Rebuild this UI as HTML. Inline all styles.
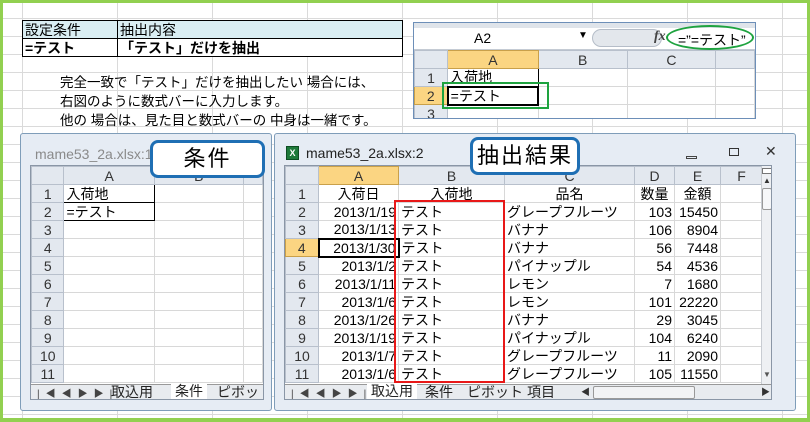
<!DOCTYPE html>
<html><head><meta charset="utf-8"><style>
*{margin:0;padding:0;box-sizing:border-box}
body{width:810px;height:422px;position:relative;overflow:hidden;background:#fff;font-family:"Liberation Sans","Noto Sans CJK JP",sans-serif;color:#000}
.a{position:absolute}
.bg{position:absolute;left:0;top:0;width:810px;height:422px;
background-image:linear-gradient(to right,#dadada 1px,transparent 1px),linear-gradient(to bottom,#dadada 1px,transparent 1px);
background-size:95px 18px;background-position:22px 0}
.frame{position:absolute;left:0;top:0;width:810px;height:422px;border:3px solid #92d050;border-bottom-width:4px}
table{border-collapse:collapse;table-layout:fixed;position:absolute}
td{height:18px;border:1px solid #d8d8d8;font-size:14px;line-height:16px;white-space:nowrap;overflow:hidden;padding:0 2px}
td.h{background:#e3e8ef;color:#333;text-align:center;border-color:#b8c0cc}
td.o{background:#fbd582;border-color:#c9a04a}
.r{text-align:right}.c{text-align:center}
.win{position:absolute;background:#e6ecf4;border:1px solid #7f9db9;border-radius:3px}
.call{position:absolute;background:#fff;border:3px solid #1f6fb4;border-radius:8px;font-size:22px;text-align:center;letter-spacing:2px}
.tabs{position:absolute;height:16px;background:#e8ebef;border-top:1px solid #999;font-size:14px;line-height:15px;color:#222}
</style></head><body>
<div class="bg"></div>

<table style="left:22px;top:20px;width:380px">
<col style="width:95px"><col style="width:285px">
<tr><td style="background:#daeef3;border:1px solid #000;height:17px">設定条件</td><td style="background:#daeef3;border:1px solid #000">抽出内容</td></tr>
<tr><td style="background:#fff;border:1px solid #000;font-weight:bold;height:17px">=テスト</td><td style="background:#fff;border:1px solid #000;font-weight:bold">「テスト」だけを抽出</td></tr>
</table>
<div class="a" style="left:60px;top:73px;font-size:13.5px;line-height:19px">完全一致で「テスト」だけを抽出したい 場合には、<br>右図のように数式バーに入力します。<br>他の 場合は、見た目と数式バーの 中身は一緒です。</div>

<div class="a" style="left:413px;top:22px;width:343px;height:97px;border:1px solid #6d8fb8;background:#fff;overflow:hidden">
 <div class="a" style="left:0;top:0;width:343px;height:5px;background:#dfe4ea"></div>
 <div class="a" style="left:0;top:5px;width:343px;height:22px;background:#fff;border-bottom:1px solid #c4cbd4"></div>
 <div class="a" style="left:60px;top:7px;font-size:14px">A2</div>
 <div class="a" style="left:164px;top:7px;font-size:10px">▼</div>
 <div class="a" style="left:178px;top:6px;width:70px;height:18px;border:1px solid #b5bdc8;border-radius:9px;background:#e3e7ec"></div>
 <div class="a" style="left:240px;top:6px;font-size:14px;font-style:italic;font-family:'Liberation Serif',serif;font-weight:bold;color:#444">fx</div>
 <div class="a" style="left:264px;top:7px;font-size:14px">=”=テスト”</div>
 <div class="a" style="left:252px;top:2px;width:88px;height:25px;border:2px solid #1ea33f;border-radius:50%"></div>
 <table style="left:0;top:27px">
 <col style="width:34px"><col style="width:92px"><col style="width:92px"><col style="width:92px"><col style="width:40px">
 <tr><td class="h"></td><td class="h o">A</td><td class="h">B</td><td class="h">C</td><td class="h"></td></tr>
 <tr><td class="h">1</td><td style="border-right:1px solid #000">入荷地</td><td></td><td></td><td></td></tr>
 <tr><td class="h o">2</td><td style="border:2px solid #000">=テスト</td><td></td><td></td><td></td></tr>
 <tr><td class="h">3</td><td></td><td></td><td></td><td></td></tr>
 </table>
</div>
<div class="a" style="left:442px;top:82px;width:107px;height:27px;border:2px solid #1ea33f"></div>

<div class="win" style="left:20px;top:133px;width:252px;height:278px">
 <div class="a" style="left:14px;top:12px;font-size:14px;color:#8a8a8a">mame53_2a.xlsx:1</div>
 <div class="a" style="left:9px;top:31px;width:234px;height:235px;background:#fff;border:1px solid #8a96a6;overflow:hidden">
 <table style="left:0;top:0">
 <col style="width:33px"><col style="width:92px"><col style="width:92px"><col style="width:20px">
 <tr><td class="h"></td><td class="h">A</td><td class="h">B</td><td class="h"></td></tr>
 <tr><td class="h">1</td><td style="border:1px solid #000">入荷地</td><td></td><td></td></tr>
 <tr><td class="h">2</td><td style="border:1px solid #000">=テスト</td><td></td><td></td></tr>
 <tr><td class="h">3</td><td></td><td></td><td></td></tr>
 <tr><td class="h">4</td><td></td><td></td><td></td></tr>
 <tr><td class="h">5</td><td></td><td></td><td></td></tr>
 <tr><td class="h">6</td><td></td><td></td><td></td></tr>
 <tr><td class="h">7</td><td></td><td></td><td></td></tr>
 <tr><td class="h">8</td><td></td><td></td><td></td></tr>
 <tr><td class="h">9</td><td></td><td></td><td></td></tr>
 <tr><td class="h">10</td><td></td><td></td><td></td></tr>
 <tr><td class="h">11</td><td></td><td></td><td></td></tr>
 </table>
 <div class="tabs" style="left:0;top:218px;width:234px"><span style="font-size:10px;margin-left:6px;letter-spacing:6px;color:#444">|◀◀▶▶|</span><span style="position:absolute;left:80px">取込用</span><span style="position:absolute;left:140px;top:-1px;background:#fff;padding:0 4px">条件</span><span style="position:absolute;left:186px">ピボット</span></div>
 </div>
</div>
<div class="call" style="left:150px;top:140px;width:115px;height:38px;line-height:32px">条件</div>

<div class="win" style="left:274px;top:133px;width:522px;height:278px">
 <div class="a" style="left:11px;top:12px;width:13px;height:14px;background:#1e7a3a;border:1px solid #0d4d22;color:#fff;font-size:9px;line-height:12px;text-align:center;font-weight:bold">X</div>
 <div class="a" style="left:31px;top:11px;font-size:14px;color:#222">mame53_2a.xlsx:2</div>
 <div class="a" style="left:411px;top:22px;width:11px;height:3px;border:1px solid #444"></div>
 <div class="a" style="left:454px;top:14px;width:10px;height:8px;border:1px solid #333"></div>
 <div class="a" style="left:490px;top:9px;font-size:14px;color:#333">✕</div>
 <div class="a" style="left:9px;top:31px;width:488px;height:235px;background:#fff;border:1px solid #8a96a6;overflow:hidden">
 <table style="left:0;top:0">
 <col style="width:33px"><col style="width:80px"><col style="width:106px"><col style="width:130px"><col style="width:40px"><col style="width:46px"><col style="width:42px">
 <tr><td class="h"></td><td class="h o">A</td><td class="h">B</td><td class="h">C</td><td class="h">D</td><td class="h">E</td><td class="h r">F</td></tr>
 <tr><td class="h">1</td><td class="c">入荷日</td><td class="c">入荷地</td><td class="c">品名</td><td class="c">数量</td><td class="c">金額</td><td></td></tr>
 <tr><td class="h">2</td><td class="r">2013/1/19</td><td>テスト</td><td>グレープフルーツ</td><td class="r">103</td><td class="r">15450</td><td></td></tr>
 <tr><td class="h">3</td><td class="r">2013/1/13</td><td>テスト</td><td>バナナ</td><td class="r">106</td><td class="r">8904</td><td></td></tr>
 <tr><td class="h o">4</td><td class="r" style="border:2px solid #000">2013/1/30</td><td>テスト</td><td>バナナ</td><td class="r">56</td><td class="r">7448</td><td></td></tr>
 <tr><td class="h">5</td><td class="r">2013/1/2</td><td>テスト</td><td>パイナップル</td><td class="r">54</td><td class="r">4536</td><td></td></tr>
 <tr><td class="h">6</td><td class="r">2013/1/11</td><td>テスト</td><td>レモン</td><td class="r">7</td><td class="r">1680</td><td></td></tr>
 <tr><td class="h">7</td><td class="r">2013/1/6</td><td>テスト</td><td>レモン</td><td class="r">101</td><td class="r">22220</td><td></td></tr>
 <tr><td class="h">8</td><td class="r">2013/1/26</td><td>テスト</td><td>バナナ</td><td class="r">29</td><td class="r">3045</td><td></td></tr>
 <tr><td class="h">9</td><td class="r">2013/1/19</td><td>テスト</td><td>パイナップル</td><td class="r">104</td><td class="r">6240</td><td></td></tr>
 <tr><td class="h">10</td><td class="r">2013/1/7</td><td>テスト</td><td>グレープフルーツ</td><td class="r">11</td><td class="r">2090</td><td></td></tr>
 <tr><td class="h">11</td><td class="r">2013/1/6</td><td>テスト</td><td>グレープフルーツ</td><td class="r">105</td><td class="r">11550</td><td></td></tr>
 </table>
 <div class="a" style="left:476px;top:0;width:12px;height:218px;background:#eef0f3;border-left:1px solid #c8ccd2"></div>
 <div class="a" style="left:477px;top:2px;width:10px;height:6px;border:1px solid #777;background:#fff"></div>
 <div class="a" style="left:478px;top:10px;font-size:8px;color:#333">▲</div>
 <div class="a" style="left:477px;top:22px;width:10px;height:22px;border:1px solid #999;background:#f6f7f9;border-radius:2px"></div>
 <div class="a" style="left:478px;top:204px;font-size:8px;color:#555">▼</div>
 <div class="tabs" style="left:0;top:218px;width:488px"><span style="font-size:10px;margin-left:6px;letter-spacing:6px;color:#444">|◀◀▶▶|</span><span style="position:absolute;left:82px;top:-1px;background:#fff;padding:0 4px">取込用</span><span style="position:absolute;left:140px">条件</span><span style="position:absolute;left:182px">ピボット</span><span style="position:absolute;left:242px">項目</span><span style="position:absolute;left:296px;top:0;font-size:9px;color:#333">◀</span><span style="position:absolute;left:308px;top:1px;width:102px;height:13px;border:1px solid #999;background:#f2f3f5;border-radius:2px"></span><span style="position:absolute;left:476px;top:0;font-size:9px;color:#333">▶</span></div>
 </div>
</div>
<div class="a" style="left:394px;top:200px;width:111px;height:183px;border:2px solid #e81818"></div>
<div class="call" style="left:470px;top:137px;width:110px;height:38px;line-height:32px">抽出結果</div>

<div class="frame"></div>
</body></html>
